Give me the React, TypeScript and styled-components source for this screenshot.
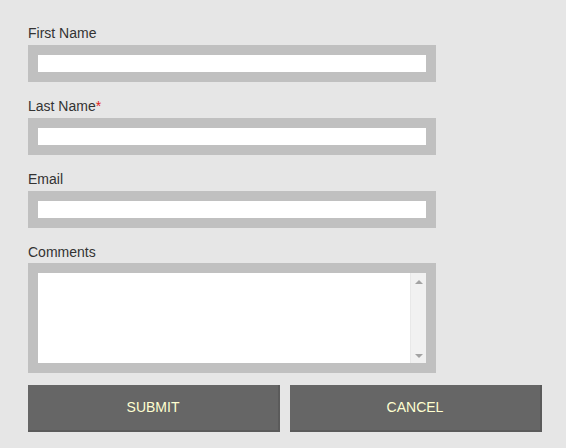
import React from 'react';
import styled, { createGlobalStyle } from 'styled-components';

const GlobalStyle = createGlobalStyle`
    body {
        margin: 0;
        background: #e6e6e6;
        font-family: Arial, "Liberation Sans", sans-serif;
    }
`

const Form = styled.form`
    display: flex;
    flex-direction: column;
    padding: 24px 28px 0 28px;
    width: 514px;
`

const Field = styled.div`
    display: flex;
    flex-direction: column;
    margin-bottom: 15px;
`

const Label = styled.label`
    font-size: 14px;
    line-height: 19px;
    color: #333333;
    margin-bottom: 2px;
`

const Required = styled.span`
    color: #e0201c;
`

const Input = styled.input`
    box-sizing: border-box;
    width: 408px;
    height: 37px;
    border: 10px solid #c0c0c0;
    background: #ffffff;
    padding: 0 4px;
    font-size: 13px;
    outline: none;
`

const AreaWrap = styled.div`
    position: relative;
    width: 408px;
    height: 110px;
    margin-top: -1px;
`

const TextArea = styled.textarea`
    box-sizing: border-box;
    display: block;
    width: 408px;
    height: 110px;
    border: 10px solid #c0c0c0;
    background: #ffffff;
    resize: none;
    overflow: hidden;
    outline: none;
    font-family: inherit;
    font-size: 13px;
    padding: 2px 20px 2px 4px;
`

const ScrollTrack = styled.div`
    position: absolute;
    top: 10px;
    right: 10px;
    bottom: 10px;
    width: 16px;
    box-sizing: border-box;
    background: #f1f1f1;
    border-left: 1px solid #e8e8e8;
    display: flex;
    flex-direction: column;
    justify-content: space-between;
    align-items: center;
    padding: 7px 0 5px;
    pointer-events: none;
`

const Arrow = styled.div<{ $down?: boolean }>`
    width: 0;
    height: 0;
    border-left: 4px solid transparent;
    border-right: 4px solid transparent;
    ${(p) => (p.$down ? 'border-top: 4px solid #a3a3a3;' : 'border-bottom: 4px solid #a3a3a3;')}
`

const Buttons = styled.div`
    display: flex;
    gap: 10px;
    margin-top: -3px;
`

const Button = styled.button`
    box-sizing: border-box;
    width: 252px;
    height: 47px;
    background: #666666;
    border: none;
    border-right: 2px solid #5b5b5b;
    border-bottom: 2px solid #5b5b5b;
    color: #ffffd0;
    font-family: inherit;
    font-size: 14px;
    text-transform: uppercase;
    padding: 0 0 2px;
    cursor: pointer;
`

export default function App() {
    return (
        <>
            <GlobalStyle />
            <Form onSubmit={(e) => e.preventDefault()}>
                <Field>
                    <Label>First Name</Label>
                    <Input type="text" />
                </Field>
                <Field>
                    <Label>Last Name<Required>*</Required></Label>
                    <Input type="text" />
                </Field>
                <Field>
                    <Label>Email</Label>
                    <Input type="email" />
                </Field>
                <Field>
                    <Label>Comments</Label>
                    <AreaWrap>
                        <TextArea />
                        <ScrollTrack>
                            <Arrow />
                            <Arrow $down />
                        </ScrollTrack>
                    </AreaWrap>
                </Field>
                <Buttons>
                    <Button type="submit">Submit</Button>
                    <Button type="button">Cancel</Button>
                </Buttons>
            </Form>
        </>
    );
}
